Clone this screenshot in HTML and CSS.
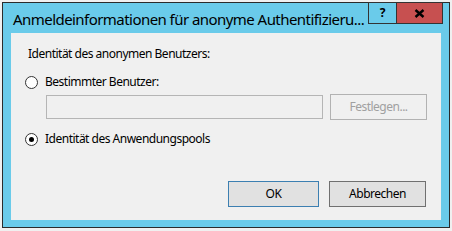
FILE: index.html
```html
<!DOCTYPE html>
<html lang="de">
<head>
<meta charset="utf-8">
<title>Anmeldeinformationen</title>
<link rel="stylesheet" href="styles.css">
</head>
<body>
<div class="window">
  <div class="titlebar">
    <div class="title">Anmeldeinformationen für anonyme Authentifizieru...</div>
    <div class="controls">
      <div class="btn-help">?</div>
      <div class="btn-close">
        <svg width="11" height="9" viewBox="0 0 11 9"><path d="M1.5 1 L9.5 8 M9.5 1 L1.5 8" stroke="#000" stroke-width="2.4" fill="none"/></svg>
      </div>
    </div>
  </div>
  <div class="content">
    <div class="group-label">Identität des anonymen Benutzers:</div>
    <div class="radio-row first">
      <span class="radio"></span>
      <span class="label">Bestimmter Benutzer:</span>
    </div>
    <div class="user-row">
      <div class="textbox"></div>
      <div class="button disabled">Festlegen...</div>
    </div>
    <div class="radio-row second">
      <span class="radio checked"></span>
      <span class="label">Identität des Anwendungspools</span>
    </div>
    <div class="footer">
      <div class="button default ok">OK</div>
      <div class="button cancel">Abbrechen</div>
    </div>
  </div>
</div>
</body>
</html>
```
FILE: styles.css
```css
html, body {
  margin: 0;
  padding: 0;
  background: #f0f0f0;
}
body {
  font-family: "Noto Sans", "Open Sans", sans-serif;
  font-size: 12px;
  letter-spacing: -0.5px;
  color: #000;
}
.window {
  margin: 2px 0 0 2px;
  width: 446px;
  height: 224px;
  border: 1px solid #2b2b2b;
  background: #6acbea;
  display: flex;
  flex-direction: column;
}
.titlebar {
  height: 30px;
  display: flex;
  align-items: flex-start;
  position: relative;
}
.title {
  font-size: 15px;
  letter-spacing: -0.55px;
  line-height: 20px;
  margin: 6px 0 0 10px;
  white-space: nowrap;
  color: #000;
}
.controls {
  position: absolute;
  top: -1px;
  right: 6px;
  display: flex;
}
.btn-help {
  width: 27px;
  height: 20px;
  border: 1px solid #333;
  border-right: none;
  font-weight: bold;
  font-size: 12px;
  letter-spacing: 0;
  line-height: 20px;
  text-align: center;
}
.btn-close {
  width: 45px;
  height: 20px;
  border: 1px solid #333;
  background: #c75050;
  display: flex;
  align-items: center;
  justify-content: center;
}
.content {
  margin: 0 8px 7px 8px;
  flex: 1;
  background: #f0f0f0;
  display: flex;
  flex-direction: column;
}
.group-label {
  margin: 13px 0 0 17px;
  line-height: 16px;
}
.radio-row {
  display: flex;
  align-items: center;
  height: 16px;
  margin-left: 14px;
}
.radio-row.first { margin-top: 12px; }
.radio-row.second { margin-top: 11px; }
.radio {
  width: 11px;
  height: 11px;
  border: 1px solid #333;
  border-radius: 50%;
  background: #fff;
  position: relative;
  margin-right: 7px;
}
.radio.checked::after {
  content: "";
  position: absolute;
  left: 3px;
  top: 3px;
  width: 5px;
  height: 5px;
  border-radius: 50%;
  background: #000;
}
.label { line-height: 16px; }
.user-row {
  display: flex;
  align-items: center;
  margin: 4px 0 0 35px;
  gap: 7px;
  height: 26px;
}
.textbox {
  width: 275px;
  height: 22px;
  border: 1px solid #b5b5b5;
  background: #f0f0f0;
}
.button {
  height: 24px;
  border: 1px solid #adadad;
  background: #e1e1e1;
  display: flex;
  align-items: center;
  justify-content: center;
  line-height: 16px;
}
.button.disabled {
  width: 95px;
  background: #f0f0f0;
  border-color: #b2b2b2;
  color: #a0a0a0;
}
.footer {
  margin-top: 34px;
  display: flex;
  justify-content: flex-end;
  gap: 10px;
  padding-right: 15px;
}
.button.ok {
  width: 89px;
  border-color: #3c7fb1;
}
.button.cancel {
  width: 95px;
  border-color: #707070;
}
```
